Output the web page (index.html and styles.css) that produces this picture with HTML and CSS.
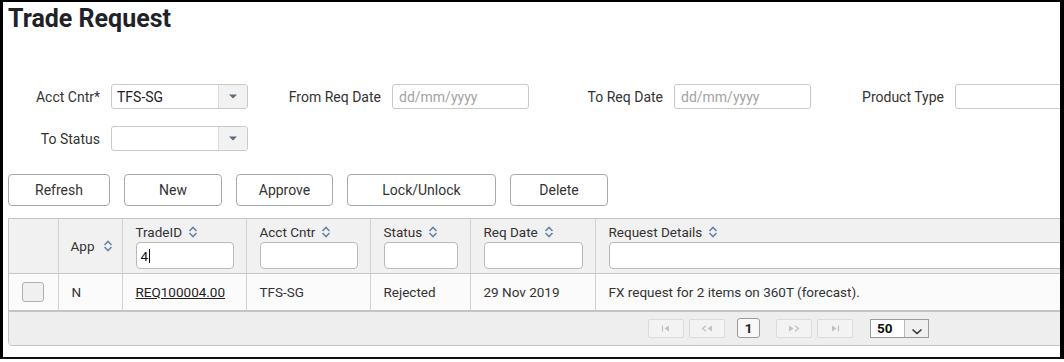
FILE: index.html
```html
<!DOCTYPE html>
<html>
<head>
<meta charset="utf-8">
<title>Trade Request</title>
<link rel="stylesheet" href="styles.css">
</head>
<body>
<div class="screen">
  <h1 class="title">Trade Request</h1>

  <div class="filters">
    <div class="frow">
      <label class="flabel first">Acct Cntr*</label>
      <div class="select"><span class="sval">TFS-SG</span><span class="sbtn"><svg width="8" height="5" viewBox="0 0 8 5"><path d="M0 0.5 H8 L4 4.5 Z" fill="#5a6b7d"/></svg></span></div>
      <label class="flabel">From Req Date</label>
      <div class="input ph">dd/mm/yyyy</div>
      <label class="flabel mid">To Req Date</label>
      <div class="input ph">dd/mm/yyyy</div>
      <label class="flabel">Product Type</label>
      <div class="input"></div>
    </div>
    <div class="frow">
      <label class="flabel first">To Status</label>
      <div class="select"><span class="sval"></span><span class="sbtn"><svg width="8" height="5" viewBox="0 0 8 5"><path d="M0 0.5 H8 L4 4.5 Z" fill="#5a6b7d"/></svg></span></div>
    </div>
  </div>

  <div class="toolbar">
    <button class="btn b-refresh">Refresh</button>
    <button class="btn b-new">New</button>
    <button class="btn b-approve">Approve</button>
    <button class="btn b-lock">Lock/Unlock</button>
    <button class="btn b-delete">Delete</button>
  </div>

  <div class="grid">
    <table class="tbl">
      <colgroup>
        <col class="c-sel"><col class="c-app"><col class="c-id"><col class="c-acct"><col class="c-status"><col class="c-date"><col class="c-details">
      </colgroup>
      <thead>
        <tr>
          <th></th>
          <th class="th-app"><span class="hl">App <svg class="sort" width="10" height="12" viewBox="0 0 10 12"><path d="M1.5 5 L5 1.5 L8.5 5 M1.5 7 L5 10.5 L8.5 7" fill="none" stroke="#6a87a6" stroke-width="1.6"/></svg></span></th>
          <th><div class="hl">TradeID <svg class="sort" width="10" height="12" viewBox="0 0 10 12"><path d="M1.5 5 L5 1.5 L8.5 5 M1.5 7 L5 10.5 L8.5 7" fill="none" stroke="#6a87a6" stroke-width="1.6"/></svg></div><div class="hin">4<span class="cursor"></span></div></th>
          <th><div class="hl">Acct Cntr <svg class="sort" width="10" height="12" viewBox="0 0 10 12"><path d="M1.5 5 L5 1.5 L8.5 5 M1.5 7 L5 10.5 L8.5 7" fill="none" stroke="#6a87a6" stroke-width="1.6"/></svg></div><div class="hin"></div></th>
          <th><div class="hl">Status <svg class="sort" width="10" height="12" viewBox="0 0 10 12"><path d="M1.5 5 L5 1.5 L8.5 5 M1.5 7 L5 10.5 L8.5 7" fill="none" stroke="#6a87a6" stroke-width="1.6"/></svg></div><div class="hin"></div></th>
          <th><div class="hl">Req Date <svg class="sort" width="10" height="12" viewBox="0 0 10 12"><path d="M1.5 5 L5 1.5 L8.5 5 M1.5 7 L5 10.5 L8.5 7" fill="none" stroke="#6a87a6" stroke-width="1.6"/></svg></div><div class="hin"></div></th>
          <th><div class="hl">Request Details <svg class="sort" width="10" height="12" viewBox="0 0 10 12"><path d="M1.5 5 L5 1.5 L8.5 5 M1.5 7 L5 10.5 L8.5 7" fill="none" stroke="#6a87a6" stroke-width="1.6"/></svg></div><div class="hin wide"></div></th>
        </tr>
      </thead>
      <tbody>
        <tr>
          <td class="td-sel"><span class="chk"></span></td>
          <td>N</td>
          <td><a class="link">REQ100004.00</a></td>
          <td>TFS-SG</td>
          <td>Rejected</td>
          <td>29 Nov 2019</td>
          <td>FX request for 2 items on 360T (forecast).</td>
        </tr>
      </tbody>
    </table>
    <div class="pager">
      <span class="pbtn dis"><svg width="10" height="7" viewBox="0 0 10 7"><path d="M1.5 0.5 V6.5" stroke="#bcc3cb" stroke-width="1.2"/><path d="M8 0.5 V6.5 L3.5 3.5 Z" fill="#bcc3cb"/></svg></span>
      <span class="pbtn dis"><svg width="12" height="7" viewBox="0 0 12 7"><path d="M5 0.8 L1.5 3.5 L5 6.2" fill="none" stroke="#bcc3cb" stroke-width="1.2"/><path d="M11 0.5 V6.5 L6.5 3.5 Z" fill="#bcc3cb"/></svg></span>
      <span class="pnum">1</span>
      <span class="pbtn dis next"><svg width="12" height="7" viewBox="0 0 12 7"><path d="M1 0.5 V6.5 L5.5 3.5 Z" fill="#bcc3cb"/><path d="M7 0.8 L10.5 3.5 L7 6.2" fill="none" stroke="#bcc3cb" stroke-width="1.2"/></svg></span>
      <span class="pbtn dis"><svg width="10" height="7" viewBox="0 0 10 7"><path d="M2 0.5 V6.5 L6.5 3.5 Z" fill="#bcc3cb"/><path d="M8.5 0.5 V6.5" stroke="#bcc3cb" stroke-width="1.2"/></svg></span>
      <span class="psize"><span class="psval">50</span><span class="psbtn"><svg width="12" height="7" viewBox="0 0 12 7"><path d="M1.5 1.5 L6 5.5 L10.5 1.5" fill="none" stroke="#333" stroke-width="1.6"/></svg></span></span>
    </div>
  </div>
</div>
</body>
</html>
```

FILE: styles.css
```css
* { box-sizing: border-box; }

html, body {
  margin: 0;
  padding: 0;
  background: #ffffff;
}

body {
  width: 1064px;
  height: 362px;
  font-family: Roboto, "Liberation Sans", Arial, sans-serif;
  font-size: 13.5px;
  color: #333333;
}

.screen {
  width: 1064px;
  height: 359px;
  border-top: 2px solid #000;
  border-left: 3px solid #000;
  border-right: 4px solid #000;
  border-bottom: 2px solid #111;
  overflow: hidden;
  background: #fff;
}

.title {
  margin: 3px 0 0 5px;
  font-size: 25px;
  line-height: 28px;
  font-weight: 700;
  color: #1f2226;
}

/* filters */
.filters {
  padding-top: 51px;
  display: flex;
  flex-direction: column;
  gap: 17px;
}

.frow {
  display: flex;
  align-items: center;
  height: 25px;
  white-space: nowrap;
}

.flabel {
  width: 133px;
  flex: none;
  text-align: right;
  margin-right: 11px;
  color: #333;
  font-size: 14px;
}

.flabel.first { width: 97px; }
.flabel.mid { width: 134px; }

.select, .input {
  flex: none;
  width: 137px;
  height: 25px;
  border: 1px solid #c9c9c9;
  border-radius: 3px;
  background: #fff;
  display: flex;
  align-items: center;
  font-size: 14px;
}

.input { padding-left: 6px; }
.input.ph { color: #a3a3a3; }

.sval {
  flex: 1;
  padding-left: 5px;
  color: #222;
}

.sbtn {
  width: 29px;
  height: 100%;
  border-left: 1px solid #dcdcdc;
  background: #f2f2f2;
  display: flex;
  align-items: center;
  justify-content: center;
  border-radius: 0 2px 2px 0;
}

/* toolbar */
.toolbar {
  display: flex;
  gap: 14px;
  margin-top: 23px;
  padding-left: 5px;
}

.btn {
  height: 32px;
  border: 1px solid #a9a9a9;
  border-radius: 4px;
  background: #fff;
  font-family: Roboto, "Liberation Sans", Arial, sans-serif;
  font-size: 14px;
  color: #333;
  padding: 0;
}

.b-refresh { width: 102px; }
.b-new { width: 98px; }
.b-approve { width: 97px; }
.b-lock { width: 149px; }
.b-delete { width: 98px; }

/* grid */
.grid {
  margin: 12px 0 0 5px;
  width: 1600px;
  border: 1px solid #c4c4c4;
  border-radius: 0 0 4px 4px;
}

.tbl {
  border-collapse: collapse;
  table-layout: fixed;
  width: 100%;
}

.c-sel { width: 49px; }
.c-app { width: 64px; }
.c-id { width: 124px; }
.c-acct { width: 124px; }
.c-status { width: 100px; }
.c-date { width: 125px; }

.tbl th {
  background: #f1f1f1;
  font-weight: 400;
  text-align: left;
  vertical-align: top;
  padding: 5px 12px 4px 13px;
  border-left: 1px solid #d2d2d2;
  border-bottom: 1px solid #c6c6c6;
  height: 54px;
}

.tbl th:first-child { border-left: none; }

.tbl th.th-app {
  vertical-align: middle;
  text-align: center;
  padding: 0 4px 0 8px;
}

.hl {
  line-height: 16px;
  height: 16px;
  color: #333;
  display: flex;
  align-items: center;
  gap: 6px;
  white-space: nowrap;
}

.th-app .hl { display: inline-flex; gap: 9px; }

.sort { flex: none; }

.hin {
  margin-top: 2px;
  height: 27px;
  border: 1px solid #b9b9b9;
  border-radius: 4px;
  background: #fff;
  padding-left: 4px;
  display: flex;
  align-items: center;
  color: #111;
}

.hin.wide { width: 456px; }

.cursor {
  display: inline-block;
  width: 1px;
  height: 14px;
  background: #111;
  margin-left: 1px;
}

.tbl td {
  height: 37px;
  background: #fbfbfb;
  padding: 0 13px;
  border-left: 1px solid #d2d2d2;
  border-bottom: 2px solid #c4c4c4;
  color: #333;
  white-space: nowrap;
}

.tbl td:first-child { border-left: none; }

.td-sel { padding: 0 !important; }

.chk {
  display: block;
  width: 22px;
  height: 20px;
  margin-left: 13px;
  border: 1px solid #b0b0b0;
  border-radius: 3px;
  background: #f0f0f0;
}

.link {
  color: #222;
  text-decoration: underline;
}

/* pager */
.pager {
  height: 33px;
  background: #eeeeee;
  display: flex;
  align-items: center;
  padding-left: 639px;
  border-radius: 0 0 4px 4px;
}

.pbtn {
  width: 36px;
  height: 19px;
  border: 1px solid #dcdcdc;
  border-radius: 2px;
  background: #f3f3f3;
  display: flex;
  align-items: center;
  justify-content: center;
  margin-right: 5px;
}

.pbtn.next { margin-left: 16px; }

.pnum {
  width: 23px;
  height: 20px;
  border: 1px solid #9a9a9a;
  border-radius: 3px;
  background: #f8f8f8;
  font-weight: 700;
  color: #222;
  display: flex;
  align-items: center;
  justify-content: center;
  margin-left: 7px;
}

.psize {
  margin-left: 12px;
  width: 59px;
  height: 19px;
  border: 1px solid #9a9a9a;
  display: flex;
  background: #fff;
}

.psval {
  flex: 1;
  font-weight: 700;
  color: #111;
  padding-left: 6px;
  line-height: 17px;
}

.psbtn {
  width: 24px;
  border-left: 1px solid #bbb;
  background: #f0f0f0;
  display: flex;
  align-items: flex-end;
  justify-content: center;
  padding-bottom: 2px;
}
```
